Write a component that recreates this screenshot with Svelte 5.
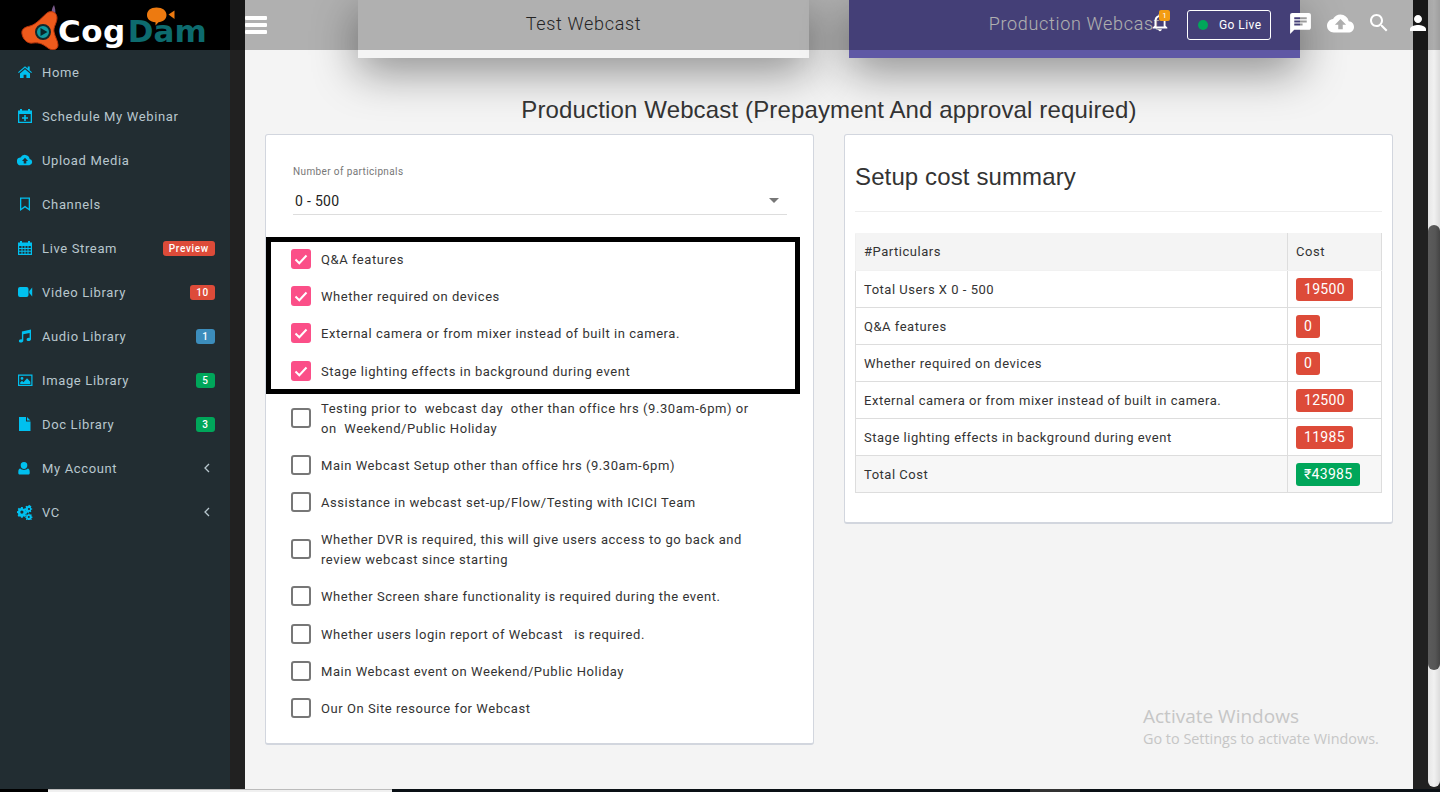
<script>
  const nav = [
    { label: 'Home', icon: 'home' },
    { label: 'Schedule My Webinar', icon: 'calplus' },
    { label: 'Upload Media', icon: 'cloud' },
    { label: 'Channels', icon: 'bookmark' },
    { label: 'Live Stream', icon: 'cal', badge: 'Preview', tone: 'red' },
    { label: 'Video Library', icon: 'video', badge: '10', tone: 'red' },
    { label: 'Audio Library', icon: 'music', badge: '1', tone: 'blue' },
    { label: 'Image Library', icon: 'image', badge: '5', tone: 'green' },
    { label: 'Doc Library', icon: 'file', badge: '3', tone: 'green' },
    { label: 'My Account', icon: 'user', chevron: true },
    { label: 'VC', icon: 'cogs', chevron: true }
  ];

  const options = [
    { text: 'Q&A features', on: true },
    { text: 'Whether required on devices', on: true },
    { text: 'External camera or from mixer instead of built in camera.', on: true },
    { text: 'Stage lighting effects in background during event', on: true },
    { text: 'Testing prior to  webcast day  other than office hrs (9.30am-6pm) or on  Weekend/Public Holiday', on: false },
    { text: 'Main Webcast Setup other than office hrs (9.30am-6pm)', on: false },
    { text: 'Assistance in webcast set-up/Flow/Testing with ICICI Team', on: false },
    { text: 'Whether DVR is required, this will give users access to go back and review webcast since starting', on: false },
    { text: 'Whether Screen share functionality is required during the event.', on: false },
    { text: 'Whether users login report of Webcast   is required.', on: false },
    { text: 'Main Webcast event on Weekend/Public Holiday', on: false },
    { text: 'Our On Site resource for Webcast', on: false }
  ];

  const costs = [
    ['Total Users X 0 - 500', '19500'],
    ['Q&A features', '0'],
    ['Whether required on devices', '0'],
    ['External camera or from mixer instead of built in camera.', '12500'],
    ['Stage lighting effects in background during event', '11985']
  ];
</script>

{#snippet navIcon(name)}
  <svg class="nav-icon" viewBox="0 0 16 16" aria-hidden="true">
    {#if name === 'home'}
      <path d="M8 2.200 1 8.200l.8.9L8 3.800l6.200 5.300.8-.9-2.300-2V2.600h-2v1.800zM3 9.500V14h3.600v-3.300h2.800V14H13V9.500L8 5.200z" />
    {:else if name === 'calplus'}
      <path fill-rule="evenodd" d="M3 1h2v1.500h6V1h2v1.500h2V15H1V2.500h2zM2.300 6v7.700h11.400V6zM7.200 7h1.600v2.200H11v1.600H8.800V13H7.200v-2.200H5V9.200h2.200z" />
    {:else if name === 'cloud'}
      <path fill-rule="evenodd" d="M12.700 6.900A4.900 4.900 0 0 0 3.500 5.600 3.800 3.800 0 0 0 4 13.200h8.300a3.200 3.200 0 0 0 .4-6.300zM9.300 9v2.600H6.700V9H5l3-3.200L11 9z" />
    {:else if name === 'bookmark'}
      <path fill-rule="evenodd" d="M3 1.500h10V15l-5-3.600L3 15zM4.300 2.800v9.700L8 9.800l3.700 2.700V2.800z" />
    {:else if name === 'cal'}
      <path fill-rule="evenodd" d="M3 1h2v1.500h6V1h2v1.500h2V15H1V2.500h2zM2.200 6v2h2.300V6zm3.300 0v2h2V6zm3 0v2h2V6zm3 0v2h2.300V6zM2.200 9v1.800h2.300V9zm3.300 0v1.800h2V9zm3 0v1.800h2V9zm3 0v1.800h2.300V9zM2.200 11.800v2h2.300v-2zm3.300 0v2h2v-2zm3 0v2h2v-2zm3 0v2h2.300v-2z" />
    {:else if name === 'video'}
      <path d="M1 5a2 2 0 0 1 2-2h6.500a2 2 0 0 1 2 2v6a2 2 0 0 1-2 2H3a2 2 0 0 1-2-2zm11.300 2L15.200 3.500v9L12.300 9z" />
    {:else if name === 'music'}
      <path d="M14 1.500v9.800c0 1.100-1.200 1.800-2.400 1.800s-2-.7-2-1.600.9-1.700 2.100-1.700c.3 0 .6 0 .9.100V5L6.300 6.300v6.500c0 1.100-1.200 1.800-2.400 1.800s-2-.7-2-1.600.9-1.700 2.100-1.700c.3 0 .6 0 .9.100V3.500z" />
    {:else if name === 'image'}
      <path fill-rule="evenodd" d="M1 2.500h14.500v11.500H1zM2.200 3.700v9.100h12.100V3.700zM5 5a1.400 1.400 0 1 1 0 2.800A1.400 1.400 0 0 1 5 5zm-1.800 7v-1.500L5 8.700l1.500 1.500 3.500-4 3.300 3.600V12z" />
    {:else if name === 'file'}
      <path d="M2 1h7v4.500h4.500V15H2zM10 1l3.500 3.500H10z" />
    {:else if name === 'user'}
      <path d="M7 2a3.300 3.300 0 0 1 3.300 3.500C10.300 7.500 8.800 9 7 9S3.700 7.500 3.700 5.500A3.300 3.300 0 0 1 7 2zM3.300 8.600C4.300 9.600 5.500 10 7 10s2.700-.4 3.700-1.400c1.300.2 2 1.300 2 3.400v1c0 1-.7 1.500-1.600 1.500H2.900C2 14.500 1.300 14 1.300 13v-1c0-2.100.7-3.200 2-3.400z" />
    {:else}
      <path fill-rule="evenodd" d="M6 4.500l1 .4.900-.7 1.300 1.300-.7 1 .4 1 1.100.2v1.800l-1.100.2-.4 1 .7 1-1.300 1.300-1-.7-.9.4-.2 1.100H4l-.2-1.100-1-.4-.9.7L.6 11.200l.7-1-.4-1-.9-.2V7.200l1-.2.400-1-.7-1L1.900 3.700l1 .7.900-.4L4 3h1.800zM4.900 6.500a1.600 1.600 0 1 0 0 3.200 1.600 1.600 0 0 0 0-3.200z" />
      <path fill-rule="evenodd" d="M12.500 0.800l.5 1 .9 0 .5 1-.6.700.4.800 1 .1v1.200l-1 .2-.4.800.5.800-.8.800-.8-.5-.8.4-.2 1h-1.200l-.2-1-.7-.3-.8.500-.6-.8.500-.8-.3-.8-.7-.2V4.400l1-.2.300-.8-.5-.8.800-.8.800.5.700-.3zM12 3.900a1.100 1.100 0 1 0 0 2.200 1.100 1.100 0 0 0 0-2.200z" />
      <path fill-rule="evenodd" d="M12.300 9.500l.3.900.7.200.8-.4.700.7-.4.800.2.700.9.300v1l-.9.200-.3.700.5.800-.8.700-.7-.5-.8.300-.2.900h-1l-.2-.9-.7-.3-.8.500-.7-.7.400-.8-.2-.7-.8-.2v-1l.9-.3.200-.7-.4-.7.700-.7.800.4.700-.3.200-.9zM11.800 12a1 1 0 1 0 0 2 1 1 0 0 0 0-2z" />
    {/if}
  </svg>
{/snippet}

<div class="screen">
  <div class="shell">
    <aside class="sidebar">
      <div class="logo">
        <svg class="logo-mark" viewBox="20 0 45 50" aria-hidden="true">
          <path d="M52 15c-1-4 0-7 2-10 1 3 2 6 1 10z" fill="#7a5a8a" />
          <path d="M47 13C51 10 57 12 57 18 57 23 53 27 54 32 55 37 58 41 58 45 58 50 52 51 48 48 44 45 40 42 33 43 28 44 23 40 22 34 21 29 25 27 30 26 37 24 42 17 47 13z" fill="#ee5a1c" stroke="#b9350b" stroke-width="1" />
          <circle cx="43" cy="32" r="7" fill="#119aa0" stroke="#12292c" stroke-width="2" />
          <path d="M40.500 28 47.500 32l-7 4z" fill="#08262a" />
        </svg>
        <span class="logo-cog">Cog</span><span class="logo-dam">Dam</span>
        <svg class="logo-bubble" viewBox="0 0 30 20" aria-hidden="true">
          <path d="M1 8c0-4.500 3.500-7.500 9.500-7.500S20.500 3.500 20.500 8s-4 7-8 7.200l-3 3.300v-3.300C4 14.800 1 12 1 8z" fill="#ed7a10" />
          <path d="M22.500 7.500 28.500 3.500v8.500z" fill="#ed7a10" />
        </svg>
      </div>
      <nav class="nav">
        {#each nav as item}
          <a class="nav-row" href="#top">
            <span class="nav-icon-box">{@render navIcon(item.icon)}</span>
            <span class="nav-label">{item.label}</span>
            {#if item.badge}
              <span class="nav-badge {item.tone}">{item.badge}</span>
            {/if}
            {#if item.chevron}
              <svg class="chevron" viewBox="0 0 6 10" aria-hidden="true"><path d="M5 1 1 5l4 4" /></svg>
            {/if}
          </a>
        {/each}
      </nav>
    </aside>

    <div class="gutter"></div>

    <main class="main">
      <section class="plans">
        <div class="plan plan-test">Test Webcast</div>
        <div class="plan plan-prod">Production Webcast</div>
      </section>

      <h1 class="page-title">Production Webcast (Prepayment And approval required)</h1>

      <div class="columns">
        <section class="card card-form">
          <div class="select-field">
            <div class="select-label">Number of participnals</div>
            <div class="select-value">
              <span>0 - 500</span>
              <span class="caret"></span>
            </div>
          </div>
          <div class="checks">
            <div class="annotation"></div>
            {#each options as opt}
              <label class="check-row">
                <span class="box" class:on={opt.on}>
                  {#if opt.on}
                    <svg viewBox="0 0 20 20" aria-hidden="true"><path d="M4.500 10.500 8.300 14.300 15.500 6.500" /></svg>
                  {/if}
                </span>
                <span class="check-text">{opt.text}</span>
              </label>
            {/each}
          </div>
        </section>

        <section class="card card-summary">
          <h2 class="summary-title">Setup cost summary</h2>
          <div class="rule"></div>
          <table class="cost-table">
            <thead>
              <tr><th>#Particulars</th><th class="col-cost">Cost</th></tr>
            </thead>
            <tbody>
              {#each costs as row}
                <tr>
                  <td>{row[0]}</td>
                  <td><span class="amount red">{row[1]}</span></td>
                </tr>
              {/each}
              <tr class="total">
                <td>Total Cost</td>
                <td><span class="amount green">₹43985</span></td>
              </tr>
            </tbody>
          </table>
        </section>
      </div>

      <div class="watermark">
        <div class="wm-title">Activate Windows</div>
        <div class="wm-sub">Go to Settings to activate Windows.</div>
      </div>
    </main>

    <div class="gutter"></div>

    <div class="scrollbar"><div class="thumb"></div></div>

    <header class="topbar">
      <div class="burger"><span></span><span></span><span></span></div>
      <div class="top-actions">
        <span class="bell">
          <svg viewBox="0 0 24 24" aria-hidden="true"><path d="M12 22c1.100 0 2-.9 2-2h-4c0 1.100.9 2 2 2zm6-6v-5c0-3.070-1.630-5.640-4.500-6.320V4c0-.83-.67-1.500-1.500-1.500s-1.500.67-1.500 1.500v.68C7.640 5.360 6 7.920 6 11v5l-2 2v1h16v-1l-2-2zm-2 1H8v-6c0-2.480 1.510-4.500 4-4.500s4 2.020 4 4.500v6z" /></svg>
          <span class="bell-count">1</span>
        </span>
        <button class="go-live"><span class="dot"></span>Go Live</button>
        <svg class="top-icon chat" viewBox="0 0 24 24" aria-hidden="true"><path d="M20 2H4c-1.100 0-1.990.9-1.990 2L2 22l4-4h14c1.100 0 2-.9 2-2V4c0-1.100-.9-2-2-2zM6 9h12v2H6V9zm8 5H6v-2h8v2zm4-6H6V6h12v2z" /></svg>
        <svg class="top-icon upload" viewBox="0 0 24 24" aria-hidden="true"><path d="M19.350 10.040C18.670 6.590 15.640 4 12 4 9.110 4 6.600 5.640 5.350 8.040 2.340 8.360 0 10.910 0 14c0 3.310 2.690 6 6 6h13c2.760 0 5-2.240 5-5 0-2.640-2.050-4.780-4.650-4.960zM14 13v4h-4v-4H7l5-5 5 5h-3z" /></svg>
        <svg class="top-icon search" viewBox="0 0 24 24" aria-hidden="true"><path d="M15.500 14h-.79l-.28-.27C15.410 12.590 16 11.110 16 9.500 16 5.910 13.090 3 9.500 3S3 5.910 3 9.500 5.910 16 9.500 16c1.610 0 3.090-.59 4.230-1.570l.27.280v.79l5 4.990L20.490 19l-4.990-5zm-6 0C7.010 14 5 11.990 5 9.500S7.010 5 9.500 5 14 7.010 14 9.500 11.990 14 9.500 14z" /></svg>
        <svg class="top-icon person" viewBox="0 0 24 24" aria-hidden="true"><path d="M12 12c2.210 0 4-1.790 4-4s-1.790-4-4-4-4 1.790-4 4 1.790 4 4 4zm0 2c-2.670 0-8 1.340-8 4v2h16v-2c0-2.660-5.330-4-8-4z" /></svg>
      </div>
    </header>
  </div>

  <footer class="taskbar">
    <span class="tb-black"></span>
    <span class="tb-white"></span>
    <span class="tb-dark"></span>
    <span class="tb-active"></span>
    <span class="tb-rest"></span>
  </footer>
</div>

<style>
  :global(body) {
    margin: 0;
    background: #222;
    font-family: Roboto, "Liberation Sans", sans-serif;
  }

  .screen {
    width: 1440px;
    height: 792px;
    display: flex;
    flex-direction: column;
    overflow: hidden;
  }

  .shell {
    position: relative;
    flex: 1;
    display: flex;
    min-height: 0;
  }

  /* sidebar */
  .sidebar {
    width: 230px;
    flex: none;
    background: #222d32;
  }

  .logo {
    position: relative;
    height: 50px;
    background: #000;
    display: flex;
    align-items: center;
    padding-left: 58px;
    box-sizing: border-box;
    font-family: "DejaVu Sans", sans-serif;
    font-weight: 700;
    font-size: 31px;
    overflow: hidden;
  }

  .logo-cog { color: #fff; padding-top: 12px; letter-spacing: 0.5px; }
  .logo-dam { color: #0d6b6e; padding-top: 12px; margin-left: 2px; }

  .logo-mark {
    position: absolute;
    left: 20px;
    top: 0;
    width: 45px;
    height: 50px;
  }

  .logo-bubble {
    position: absolute;
    left: 146px;
    top: 7px;
    width: 30px;
    height: 20px;
  }

  .nav { display: flex; flex-direction: column; }

  .nav-row {
    height: 44px;
    display: flex;
    align-items: center;
    padding: 0 15px 0 17px;
    color: #b8c7ce;
    font-size: 13px;
    letter-spacing: 0.64px;
    text-decoration: none;
  }

  .nav-icon-box {
    width: 25px;
    flex: none;
    display: flex;
  }

  .nav-icon {
    width: 16px;
    height: 16px;
    fill: #00c0ef;
  }

  .nav-label { flex: 1; }

  .nav-badge {
    min-width: 19px;
    box-sizing: border-box;
    text-align: center;
    height: 15px;
    line-height: 15px;
    padding: 0 6px;
    border-radius: 3px;
    color: #fff;
    font-size: 10px;
    font-weight: 500;
    letter-spacing: 0.7px;
  }

  .red { background: #dd4b39; }
  .blue { background: #3c8dbc; }
  .green { background: #00a65a; }

  .chevron {
    width: 6px;
    height: 10px;
    margin-right: 5px;
    fill: none;
    stroke: #b8c7ce;
    stroke-width: 1.3;
  }

  .gutter {
    width: 15px;
    flex: none;
    background: #212121;
  }

  /* main */
  .main {
    position: relative;
    flex: 1;
    min-width: 0;
    background: #f4f4f4;
    padding: 0 20px;
  }

  .plans {
    display: flex;
    gap: 40px;
    margin-left: 93px;
    height: 58px;
  }

  .plan {
    width: 451px;
    height: 58px;
    box-sizing: border-box;
    padding-top: 13px;
    text-align: center;
    font-size: 18px;
    font-weight: 300;
    line-height: 22px;
    letter-spacing: 0.68px;
    box-shadow: 0 14px 45px rgba(0, 0, 0, 0.42);
  }

  .plan-test { background: #f4f4f4; color: #333; }
  .plan-prod { background: #5f58a5; color: #f4f4f4; }

  .page-title {
    margin: 38px 0 0;
    height: 38px;
    text-align: center;
    font-family: "Liberation Sans", sans-serif;
    font-weight: 400;
    font-size: 24px;
    line-height: 28px;
    letter-spacing: 0.14px;
    color: #333;
    position: relative;
  }

  .columns {
    display: grid;
    grid-template-columns: 549px 549px;
    gap: 30px;
    align-items: start;
  }

  .card {
    position: relative;
    box-sizing: border-box;
    background: #fff;
    border: 1px solid #d2d6de;
    border-bottom-width: 2px;
    border-radius: 3px;
  }

  .card-form {
    height: 611px;
    padding: 31px 26px 0 27px;
  }

  .select-label {
    font-size: 10px;
    line-height: 12px;
    color: #777;
    letter-spacing: 0.38px;
  }

  .select-value {
    margin-top: 9px;
    height: 28px;
    box-sizing: border-box;
    padding: 0 8px 0 2px;
    display: flex;
    justify-content: space-between;
    align-items: center;
    border-bottom: 1px solid #ddd;
    font-size: 14px;
    letter-spacing: 0.3px;
    color: #222;
  }

  .caret {
    width: 0;
    height: 0;
    border-left: 5.500px solid transparent;
    border-right: 5.500px solid transparent;
    border-top: 5px solid #777;
  }

  .checks {
    position: relative;
    margin: 25.400px 0 0 -2px;
    width: 465px;
  }

  .annotation {
    position: absolute;
    left: -25px;
    top: -3.400px;
    width: 534px;
    height: 157px;
    box-sizing: border-box;
    border: 5px solid #000;
    pointer-events: none;
  }

  .check-row {
    display: flex;
    align-items: center;
    gap: 10px;
    padding: 8.600px 0;
    font-size: 13px;
    line-height: 20px;
    letter-spacing: 0.55px;
    color: #333;
    white-space: pre-wrap;
  }

  .check-text { margin: 1px 0 -1px; }

  .box {
    width: 20px;
    height: 20px;
    flex: none;
    box-sizing: border-box;
    border: 2px solid #777;
    border-radius: 3px;
  }

  .box.on {
    border: 0;
    background: #fb4f88;
  }

  .box svg {
    display: block;
    width: 20px;
    height: 20px;
    fill: none;
    stroke: #fff;
    stroke-width: 2;
  }

  .card-summary {
    height: 390px;
    padding: 0 10px;
  }

  .summary-title {
    margin: 0;
    padding-top: 27px;
    height: 76px;
    box-sizing: border-box;
    font-family: "Liberation Sans", sans-serif;
    font-size: 24px;
    line-height: 30px;
    font-weight: 400;
    letter-spacing: 0.12px;
    color: #333;
  }

  .rule {
    border-top: 1px solid #eee;
    margin-bottom: 21px;
  }

  .cost-table {
    width: 527px;
    border-collapse: collapse;
    table-layout: fixed;
    font-size: 13px;
    letter-spacing: 0.52px;
    color: #333;
  }

  .cost-table th,
  .cost-table td {
    height: 37px;
    box-sizing: border-box;
    padding: 0 8px;
    border: 1px solid #ddd;
    font-weight: 400;
    text-align: left;
  }

  .cost-table th {
    padding-bottom: 2px;
    border-top-color: #f4f4f4;
    border-bottom-color: #f1f1f1;
    background: #f4f4f4;
  }

  .cost-table th:first-child { border-left-color: #f0f0f0; }

  .cost-table .total { background: #f7f7f7; }

  .cost-table .col-cost { width: 94px; }

  .amount {
    display: inline-block;
    vertical-align: middle;
    height: 23px;
    line-height: 23px;
    padding: 0 8px;
    border-radius: 3px;
    color: #fff;
    font-size: 14px;
    letter-spacing: 0.3px;
  }

  .watermark {
    position: absolute;
    left: 898px;
    top: 704px;
    font-family: "Open Sans", sans-serif;
    color: #c6c6c6;
    pointer-events: none;
  }

  .wm-title { font-size: 19px; line-height: 24px; }
  .wm-sub { font-size: 14.400px; line-height: 20px; margin-top: 1px; }

  /* scrollbar */
  .scrollbar {
    width: 12px;
    flex: none;
    margin-bottom: 2px;
    border-radius: 0 0 8px 8px;
    background: linear-gradient(90deg, #e6e6e6, #f1f1f1 50%, #dcdcdc);
    padding-top: 225px;
    box-sizing: border-box;
  }

  .thumb {
    height: 445px;
    border-radius: 6px;
    background: linear-gradient(90deg, #5c5c5c, #565656 60%, #444);
  }

  /* topbar */
  .topbar {
    position: absolute;
    left: 230px;
    right: 0;
    top: 0;
    height: 50px;
    background: rgba(0, 0, 0, 0.28);
    display: flex;
    align-items: center;
    justify-content: space-between;
  }

  .burger {
    margin-left: 15px;
    width: 22px;
    display: flex;
    flex-direction: column;
    gap: 3px;
  }

  .burger span {
    height: 4px;
    background: #fff;
    border-radius: 1px;
  }

  .top-actions {
    display: flex;
    align-items: center;
    margin-right: 10px;
    color: #fff;
  }

  .bell {
    position: relative;
    width: 22px;
    height: 22px;
    margin: -6px 16px 0 0;
  }

  .bell svg {
    display: block;
    width: 22px;
    height: 22px;
    fill: #fff;
  }

  .bell-count {
    position: absolute;
    left: 10px;
    top: -1px;
    width: 11px;
    height: 11px;
    line-height: 11px;
    text-align: center;
    border-radius: 2px;
    background: #f39c12;
    font-size: 8px;
  }

  .go-live {
    width: 84px;
    height: 30px;
    padding: 0 0 0 10px;
    display: flex;
    align-items: center;
    gap: 11px;
    box-sizing: border-box;
    background: transparent;
    border: 1px solid #fff;
    border-radius: 3px;
    color: #fff;
    font-family: inherit;
    font-size: 12px;
    letter-spacing: 0.45px;
    margin-right: 17px;
  }

  .dot {
    width: 10px;
    height: 10px;
    border-radius: 50%;
    background: #00a65a;
  }

  .top-icon {
    fill: #fff;
    flex: none;
    margin-bottom: 4px;
  }

  .chat { width: 25px; height: 25px; margin-right: 14px; }
  .upload { width: 27px; height: 27px; margin-right: 13px; }
  .search { width: 24px; height: 24px; margin-right: 15px; }
  .person { width: 24px; height: 24px; }

  /* taskbar */
  .taskbar {
    height: 3px;
    flex: none;
    display: flex;
  }

  .taskbar span { display: block; height: 3px; }
  .tb-black { width: 48px; background: #000; }
  .tb-white { width: 344px; background: #f0f0f0; border-top: 1px solid #bbb; box-sizing: border-box; }
  .tb-dark { width: 638px; background: #0a1015; }
  .tb-active { width: 50px; background: #333; }
  .tb-rest { flex: 1; background: #0a1015; }
</style>
